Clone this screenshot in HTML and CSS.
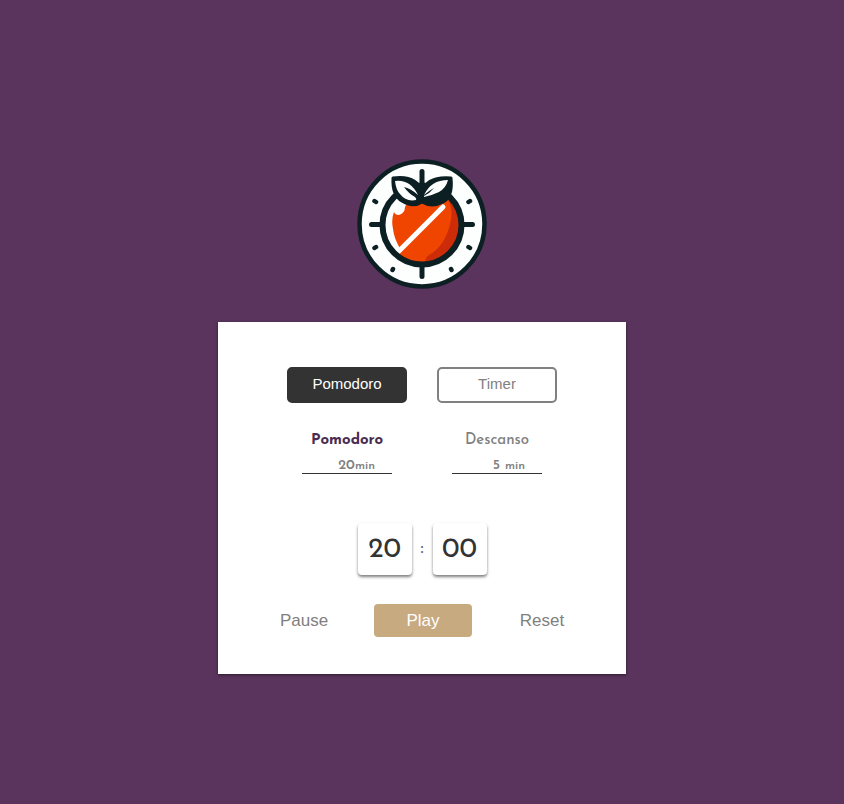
FILE: index.html
```html
<!DOCTYPE html>
<html lang="es">
<head>
<meta charset="utf-8">
<meta name="viewport" content="width=device-width, initial-scale=1">
<title>Pomodoro</title>
<link rel="stylesheet" href="styles.css">
</head>
<body>
<main class="app">
  <svg class="logo" viewBox="0 0 130 130" role="img" aria-label="Pomodoro">
    <defs><clipPath id="fruit"><circle cx="65" cy="66" r="38"/></clipPath></defs>
    <circle cx="65" cy="65" r="62.5" fill="#fdfefe" stroke="#0c2024" stroke-width="4.5"/>
    <g stroke="#0c2024" stroke-width="5" stroke-linecap="round">
      <path d="M14.500 65.500H25M105 65.500H115.500M65 106V117.500"/>
      <path d="M17.500 42l1.500 1M17.500 89l1.500-1M111.500 43l1.500-1M111.500 88l1.500 1M35.500 111l.5-1M94 110l.5 1" stroke-width="4.500"/>
    </g>
    <g clip-path="url(#fruit)">
      <rect x="25" y="25" width="80" height="82" fill="#f04500"/>
      <path d="M87 34Q98 48 93 65Q88 87 72 96Q67 99 69 106H106V34Z" fill="#cc2c08"/>
      <path d="M24 24H60L48 48Q48 54 42 56Q38 56 37 53Q34 60 36 70Q37 80 44 91L40 98L20 80Z" fill="#fdfefe"/>
      <path d="M42 92L86 48" stroke="#fff" stroke-width="5" stroke-linecap="round"/>
    </g>
    <circle cx="65" cy="66" r="39.500" fill="none" stroke="#0c2024" stroke-width="6"/>
    <path d="M65 12.500V40" stroke="#0c2024" stroke-width="5" stroke-linecap="round"/>
    <path d="M36 19Q60 16 65 33Q70 17 94 19Q96 38 86 43Q75 49 65 43Q56 49 45 42Q35 36 36 19Z" fill="#0c2024" stroke="#0c2024" stroke-width="3" stroke-linejoin="round"/>
    <path d="M38 22Q53 20 61 36Q53 29 47 28Q52 35 58 38Q60 40 59 41Q49 43 43 35Q39 31 38 22Z" fill="#fdfefe"/>
    <path d="M91 21Q74 21 67 36Q73 31 77 29Q73 34 67 37V38Q76 36 82 33Q89 29 91 21Z" fill="#fdfefe"/>
  </svg>

  <section class="card">
    <div class="modes">
      <button class="mode mode-active" type="button">Pomodoro</button>
      <button class="mode" type="button">Timer</button>
    </div>
    <div class="settings">
      <div class="setting">
        <label class="setting-name setting-name-active" for="work">Pomodoro</label>
        <div class="setting-value"><input id="work" type="text" inputmode="numeric" value="20"><span>min</span></div>
      </div>
      <div class="setting">
        <label class="setting-name" for="rest">Descanso</label>
        <div class="setting-value"><input id="rest" type="text" inputmode="numeric" value="5"><span>min</span></div>
      </div>
    </div>
    <div class="clock">
      <span class="digits">20</span>
      <span class="colon">:</span>
      <span class="digits">00</span>
    </div>
    <div class="controls">
      <button type="button">Pause</button>
      <button class="play" type="button">Play</button>
      <button type="button">Reset</button>
    </div>
  </section>
</main>
</body>
</html>
```
FILE: styles.css
```css
* {
  box-sizing: border-box;
}

body {
  margin: 0;
  background: #5a345c;
  color: #808080;
  font-family: "Josefin Sans", Lato, sans-serif;
}

.app {
  min-height: 100vh;
  display: flex;
  flex-direction: column;
  align-items: center;
  justify-content: center;
  gap: 33px;
  padding: 29px 16px 0;
}

.logo {
  width: 130px;
  height: 130px;
}

.card {
  display: flex;
  flex-direction: column;
  align-items: center;
  max-width: 100%;
  padding: 45px 35px 37px;
  background: #fff;
  box-shadow: 0 1px 3px rgba(0, 0, 0, 0.5);
}

button {
  padding: 0;
  border: 0;
  border-radius: 4px;
  background: none;
  color: #808080;
  font-family: "Liberation Sans", Arial, sans-serif;
  cursor: pointer;
}

.modes {
  display: flex;
  gap: 30px;
}

.mode {
  width: 120px;
  height: 36px;
  padding-bottom: 3px;
  border: 2px solid #808080;
  border-radius: 5px;
  font-size: 15px;
}

.mode-active {
  border-color: #333;
  background: #333;
  color: #fff;
}

.settings {
  display: flex;
  gap: 60px;
  margin-top: 28px;
}

.setting {
  width: 90px;
  display: flex;
  flex-direction: column;
  align-items: center;
}

.setting-name {
  font-size: 15px;
  font-weight: 500;
  line-height: 20px;
}

.setting-name-active {
  color: #4a2c50;
  font-weight: 700;
}

.setting-value {
  width: 100%;
  height: 23px;
  display: flex;
  align-items: flex-end;
  padding-left: 36px;
  border-bottom: 1px solid #333;
}

.setting-value input {
  width: 17px;
  padding: 0;
  border: 0;
  background: none;
  color: #808080;
  font: 600 14px/14px "Josefin Sans", Lato, sans-serif;
  text-align: center;
}

.setting-value span {
  font-size: 12px;
  font-weight: 600;
  line-height: 14px;
}

.clock {
  display: flex;
  align-items: center;
  margin-top: 49px;
}

.digits {
  width: 54px;
  height: 52px;
  border-radius: 4px;
  box-shadow: 0 2px 3px rgba(0, 0, 0, 0.5);
  color: #333;
  font-size: 28px;
  line-height: 54px;
  text-align: center;
}

.colon {
  width: 21px;
  color: #555;
  font-size: 15px;
  font-weight: 600;
  line-height: 20px;
  padding-top: 2px;
  text-align: center;
}

.controls {
  display: flex;
  gap: 21px;
  margin-top: 29px;
  padding-left: 2px;
}

.controls button {
  width: 98px;
  height: 33px;
  font-size: 17px;
}

.controls .play {
  background: #c8aa80;
  color: #fff;
}
```
